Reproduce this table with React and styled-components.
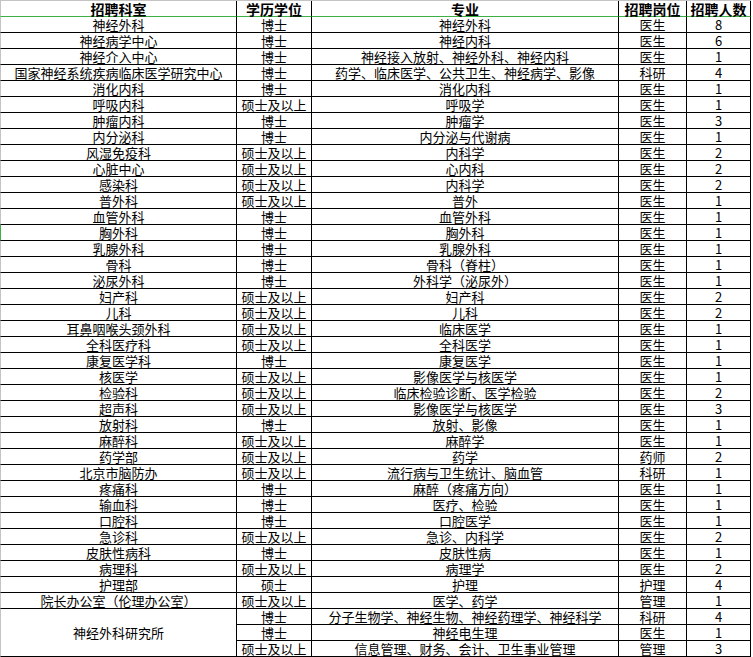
import React from 'react';
import styled, { createGlobalStyle } from 'styled-components';

const GlobalStyle = createGlobalStyle`
  html, body {
    margin: 0;
    padding: 0;
    background: #ffffff;
  }
  body {
    font-family: "Noto Sans CJK SC", "Liberation Sans", sans-serif;
    color: #000;
  }
`;

const Sheet = styled.table`
  border-collapse: separate;
  border-spacing: 0;
  table-layout: fixed;
  width: 751px;
  border-top: 1px solid #c4c4c4;
`;

const HeadCell = styled.th`
  box-sizing: border-box;
  width: ${({ w }) => w}px;
  height: 16px;
  padding: 1px 0 0;
  font-size: 14px;
  line-height: 14px;
  font-weight: bold;
  text-align: center;
  vertical-align: middle;
  white-space: nowrap;
  border-right: 1px solid #000;
  border-bottom: 1px solid #3cb043;
  border-left: ${({ first }) => (first ? '1px solid #c4c4c4' : 'none')};
`;

const Cell = styled.td`
  box-sizing: border-box;
  height: 16px;
  padding: 0;
  font-size: 13px;
  line-height: 15px;
  text-align: center;
  vertical-align: middle;
  white-space: nowrap;
  border-right: 1px solid #000;
  border-bottom: 1px solid #000;
  border-left: ${({ first, marked }) =>
    first ? `1px solid ${marked ? '#3cb043' : '#c4c4c4'}` : 'none'};
`;

const columns = [
  { title: '招聘科室', w: 237 },
  { title: '学历学位', w: 75 },
  { title: '专业', w: 307 },
  { title: '招聘岗位', w: 68 },
  { title: '招聘人数', w: 64 },
];

const rows = [
  ['神经外科', '博士', '神经外科', '医生', 8],
  ['神经病学中心', '博士', '神经内科', '医生', 6],
  ['神经介入中心', '博士', '神经接入放射、神经外科、神经内科', '医生', 1],
  ['国家神经系统疾病临床医学研究中心', '博士', '药学、临床医学、公共卫生、神经病学、影像', '科研', 4],
  ['消化内科', '博士', '消化内科', '医生', 1],
  ['呼吸内科', '硕士及以上', '呼吸学', '医生', 1],
  ['肿瘤内科', '博士', '肿瘤学', '医生', 3],
  ['内分泌科', '博士', '内分泌与代谢病', '医生', 1],
  ['风湿免疫科', '硕士及以上', '内科学', '医生', 2],
  ['心脏中心', '硕士及以上', '心内科', '医生', 2],
  ['感染科', '硕士及以上', '内科学', '医生', 2],
  ['普外科', '硕士及以上', '普外', '医生', 1],
  ['血管外科', '博士', '血管外科', '医生', 1],
  ['胸外科', '博士', '胸外科', '医生', 1],
  ['乳腺外科', '博士', '乳腺外科', '医生', 1],
  ['骨科', '博士', '骨科（脊柱）', '医生', 1],
  ['泌尿外科', '博士', '外科学（泌尿外）', '医生', 1],
  ['妇产科', '硕士及以上', '妇产科', '医生', 2],
  ['儿科', '硕士及以上', '儿科', '医生', 2],
  ['耳鼻咽喉头颈外科', '硕士及以上', '临床医学', '医生', 1],
  ['全科医疗科', '硕士及以上', '全科医学', '医生', 1],
  ['康复医学科', '博士', '康复医学', '医生', 1],
  ['核医学', '硕士及以上', '影像医学与核医学', '医生', 1],
  ['检验科', '硕士及以上', '临床检验诊断、医学检验', '医生', 2],
  ['超声科', '硕士及以上', '影像医学与核医学', '医生', 3],
  ['放射科', '博士', '放射、影像', '医生', 1],
  ['麻醉科', '硕士及以上', '麻醉学', '医生', 1],
  ['药学部', '硕士及以上', '药学', '药师', 2],
  ['北京市脑防办', '硕士及以上', '流行病与卫生统计、脑血管', '科研', 1],
  ['疼痛科', '博士', '麻醉（疼痛方向）', '医生', 1],
  ['输血科', '博士', '医疗、检验', '医生', 1],
  ['口腔科', '博士', '口腔医学', '医生', 1],
  ['急诊科', '硕士及以上', '急诊、内科学', '医生', 2],
  ['皮肤性病科', '博士', '皮肤性病', '医生', 1],
  ['病理科', '硕士及以上', '病理学', '医生', 2],
  ['护理部', '硕士', '护理', '护理', 4],
  ['院长办公室（伦理办公室）', '硕士及以上', '医学、药学', '管理', 1],
];

// last department spans three rows
const institute = {
  name: '神经外科研究所',
  items: [
    ['博士', '分子生物学、神经生物、神经药理学、神经科学', '科研', 4],
    ['博士', '神经电生理', '医生', 1],
    ['硕士及以上', '信息管理、财务、会计、卫生事业管理', '管理', 3],
  ],
};

const App = () => {
  return (
    <>
      <GlobalStyle />
      <Sheet>
        <thead>
          <tr>
            {columns.map((c, i) => (
              <HeadCell key={c.title} w={c.w} first={i === 0}>
                {c.title}
              </HeadCell>
            ))}
          </tr>
        </thead>
        <tbody>
          {rows.map((r) => (
            <tr key={r[0]}>
              {r.map((v, i) => (
                <Cell key={i} first={i === 0} marked={i === 0 && r[0] === '胸外科'}>
                  {v}
                </Cell>
              ))}
            </tr>
          ))}
          {institute.items.map((item, idx) => (
            <tr key={'inst' + idx}>
              {idx === 0 && (
                <Cell first rowSpan={institute.items.length}>
                  {institute.name}
                </Cell>
              )}
              {item.map((v, i) => (
                <Cell key={i}>{v}</Cell>
              ))}
            </tr>
          ))}
        </tbody>
      </Sheet>
    </>
  );
};

export default App;
